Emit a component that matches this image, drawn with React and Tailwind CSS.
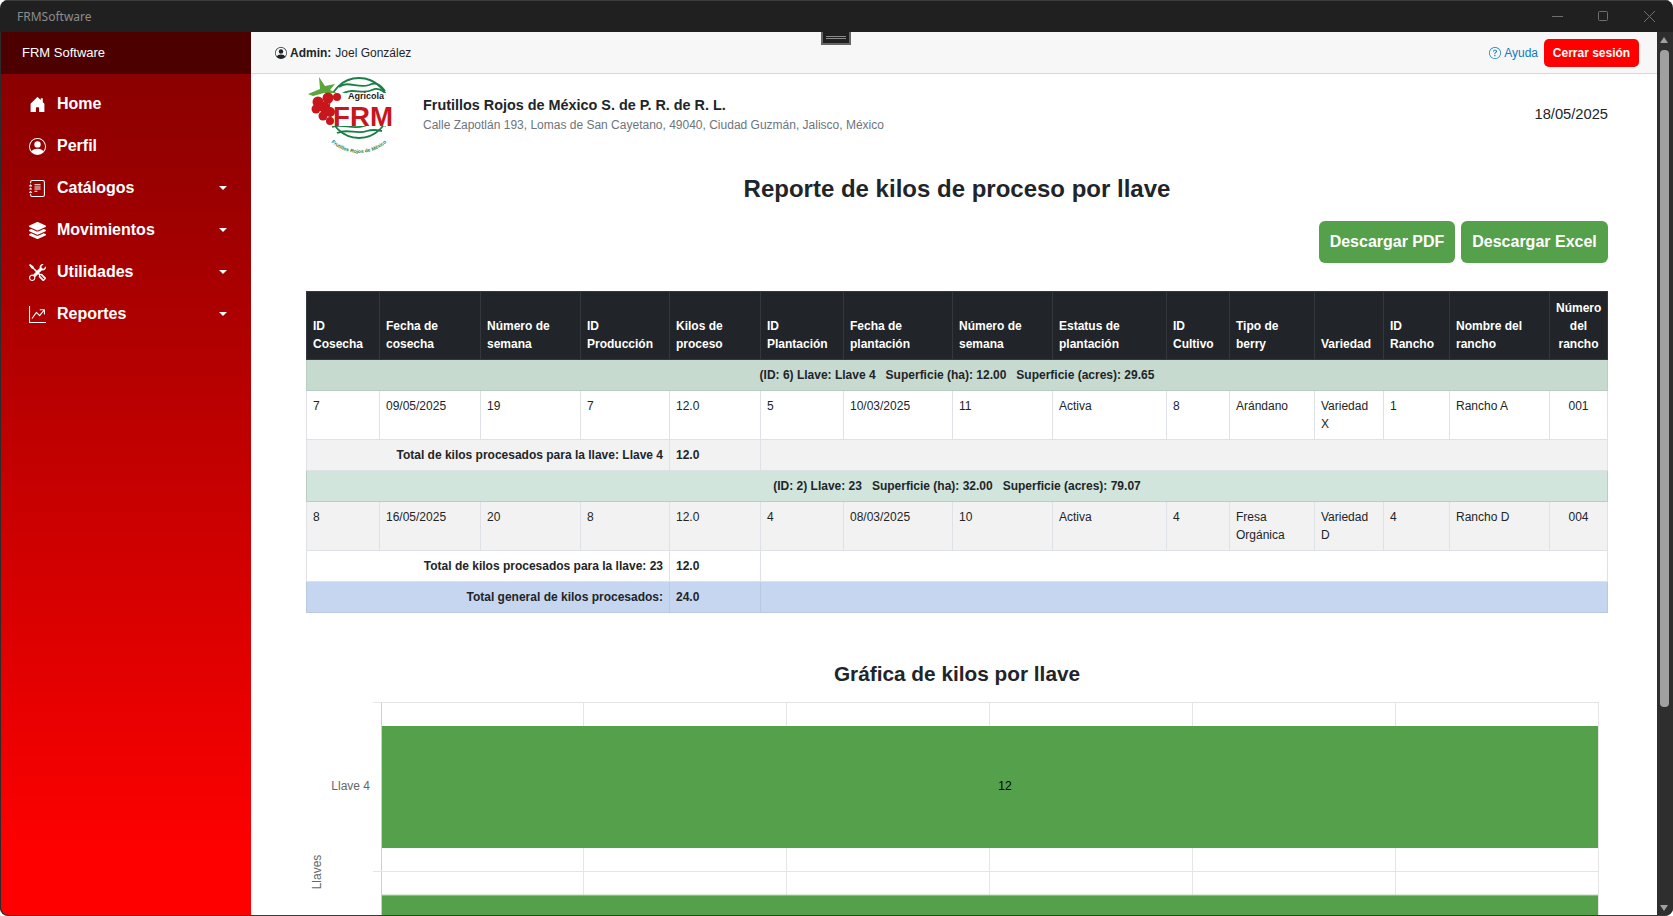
import { FaLayerGroup } from "react-icons/fa";
import {
  BsHouseDoorFill,
  BsPersonCircle,
  BsJournalText,
  BsTools,
  BsGraphUpArrow,
  BsQuestionCircle,
} from "react-icons/bs";

const menu = [
  { label: "Home", icon: BsHouseDoorFill },
  { label: "Perfil", icon: BsPersonCircle },
  { label: "Catálogos", icon: BsJournalText, caret: true },
  { label: "Movimientos", icon: FaLayerGroup, caret: true },
  { label: "Utilidades", icon: BsTools, caret: true },
  { label: "Reportes", icon: BsGraphUpArrow, caret: true },
];

const columns = [
  { title: ["ID", "Cosecha"], w: 73 },
  { title: ["Fecha de", "cosecha"], w: 101 },
  { title: ["Número de", "semana"], w: 100 },
  { title: ["ID", "Producción"], w: 89 },
  { title: ["Kilos de", "proceso"], w: 91 },
  { title: ["ID", "Plantación"], w: 83 },
  { title: ["Fecha de", "plantación"], w: 109 },
  { title: ["Número de", "semana"], w: 100 },
  { title: ["Estatus de", "plantación"], w: 114 },
  { title: ["ID", "Cultivo"], w: 63 },
  { title: ["Tipo de", "berry"], w: 85 },
  { title: ["Variedad"], w: 69 },
  { title: ["ID", "Rancho"], w: 66 },
  { title: ["Nombre del", "rancho"], w: 100 },
  { title: ["Número", "del", "rancho"], w: 58 },
];

const groups = [
  {
    info: "(ID: 6) Llave: Llave 4\u00a0\u00a0\u00a0Superficie (ha): 12.00\u00a0\u00a0\u00a0Superficie (acres): 29.65",
    groupBg: "bg-[#c7dad0]",
    rowBg: "bg-white",
    totalBg: "bg-[#f2f2f2]",
    row: ["7", "09/05/2025", "19", "7", "12.0", "5", "10/03/2025", "11", "Activa", "8", "Arándano", "Variedad X", "1", "Rancho A", "001"],
    total: "Total de kilos procesados para la llave: Llave 4",
  },
  {
    info: "(ID: 2) Llave: 23\u00a0\u00a0\u00a0Superficie (ha): 32.00\u00a0\u00a0\u00a0Superficie (acres): 79.07",
    groupBg: "bg-[#d1e5dc]",
    rowBg: "bg-[#f2f2f2]",
    totalBg: "bg-white",
    row: ["8", "16/05/2025", "20", "8", "12.0", "4", "08/03/2025", "10", "Activa", "4", "Fresa Orgánica", "Variedad D", "4", "Rancho D", "004"],
    total: "Total de kilos procesados para la llave: 23",
  },
];

const gridX = [75, 277, 480, 683, 886, 1089, 1292];

function Logo() {
  return (
    <svg width="90" height="81" viewBox="0 0 90 81" className="shrink-0">
      <defs>
        <path id="logoArc" d="M13 47 A41 41 0 0 0 93 47" fill="none" />
      </defs>
      <circle cx="53" cy="34" r="30" fill="none" stroke="#1a7f45" strokeWidth="1.8" />
      <path d="M33 13 C42 6 52 15 63 11 C70 8 74 10 79 17" fill="none" stroke="#1a7f45" strokeWidth="1.8" />
      <path d="M36 20 C46 13 56 21 66 16 C72 13 77 16 82 22" fill="none" stroke="#1a7f45" strokeWidth="1.8" />
      <path d="M26 53 C36 49 46 56 58 52 C66 49 74 49 80 52" fill="none" stroke="#1a7f45" strokeWidth="1.8" />
      <path d="M31 59 C41 54 51 61 61 57 C67 55 71 56 76 57" fill="none" stroke="#1a7f45" strokeWidth="1.8" />
      <rect x="26" y="19" width="64" height="33" fill="#fff" />
      <path d="M2 20 L14 15 L13 3 L19 12 L29 10 L24 16 L31 19 L18 19 L7 22 Z" fill="#5aa63c" />
      <g fill="#c8161d">
        <circle cx="12" cy="28" r="5.5" />
        <circle cx="22" cy="24" r="5.5" />
        <circle cx="31" cy="23" r="4" />
        <circle cx="10" cy="35" r="4.5" />
        <circle cx="18" cy="33" r="5.5" />
        <circle cx="17" cy="42" r="4.5" />
        <circle cx="24" cy="38" r="5" />
        <circle cx="24" cy="47" r="4" />
      </g>
      <text x="42" y="25" fontFamily="Liberation Sans, sans-serif" fontWeight="700" fontSize="9" fill="#1c1c1c">
        Agricola
      </text>
      <text x="27" y="52" fontFamily="Liberation Sans, sans-serif" fontWeight="700" fontSize="28" fill="#c8161d" textLength="60" lengthAdjust="spacingAndGlyphs">
        FRM
      </text>
      <text fontFamily="Liberation Sans, sans-serif" fontWeight="700" fontSize="5" fill="#1a7f45" textAnchor="middle">
        <textPath href="#logoArc" startOffset="50%">
          Frutillos Rojos de México
        </textPath>
      </text>
    </svg>
  );
}

function Chart() {
  return (
    <svg width="1302" height="226" viewBox="0 0 1302 226" className="block">
      {gridX.map(x => (
        <line key={x} x1={x + 0.5} x2={x + 0.5} y1="11" y2="226" stroke={x === 75 ? "#cfcfcf" : "#e5e5e5"} />
      ))}
      <line x1="67" x2="1293" y1="11.5" y2="11.5" stroke="#e5e5e5" />
      <line x1="67" x2="1293" y1="180.5" y2="180.5" stroke="#e5e5e5" />
      <rect x="76" y="35" width="1216" height="122" fill="#55a04a" />
      <rect x="76" y="204" width="1216" height="22" fill="#55a04a" />
      <line x1="76" x2="1292" y1="204" y2="204" stroke="#bcd8b6" />
      <text x="699" y="99" textAnchor="middle" fontFamily="Liberation Sans, sans-serif" fontSize="12" fill="#000">
        12
      </text>
      <text x="64" y="99" textAnchor="end" fontFamily="Liberation Sans, sans-serif" fontSize="12" fill="#666">
        Llave 4
      </text>
      <text transform="translate(15 181) rotate(-90)" textAnchor="middle" fontFamily="Liberation Sans, sans-serif" fontSize="12" fill="#666">
        Llaves
      </text>
    </svg>
  );
}

function ReportTable() {
  return (
    <table className="w-[1302px] table-fixed border-collapse text-[12px] leading-[18px] text-[#212529]">
      <colgroup>
        {columns.map((c, i) => (
          <col key={i} style={{ width: c.w }} />
        ))}
      </colgroup>
      <thead>
        <tr className="bg-[#212529] text-white">
          {columns.map((c, i) => (
            <th
              key={i}
              className={`h-[68px] border border-[#32383e] px-[6px] py-[6px] align-bottom font-bold ${i === 14 ? "text-center" : "text-left"}`}
            >
              {c.title.map(line => (
                <div key={line}>{line}</div>
              ))}
            </th>
          ))}
        </tr>
      </thead>
      <tbody>
        {groups.map(g => (
          <GroupRows key={g.info} group={g} />
        ))}
        <tr className="bg-[#c6d6f1] font-bold">
          <td colSpan={4} className="border border-[#b9c9e4] px-[6px] py-[6px] text-right">
            Total general de kilos procesados:
          </td>
          <td className="border border-[#b9c9e4] px-[6px] py-[6px]">24.0</td>
          <td colSpan={10} className="border border-[#b9c9e4]"></td>
        </tr>
      </tbody>
    </table>
  );
}

function GroupRows({ group }) {
  return (
    <>
      <tr className={`${group.groupBg} font-bold`}>
        <td colSpan={15} className="border border-[#b9cdc3] px-[6px] py-[6px] text-center">
          {group.info}
        </td>
      </tr>
      <tr className={`${group.rowBg} align-top`}>
        {group.row.map((value, i) => (
          <td
            key={i}
            className={`h-[49px] border border-[#dee2e6] px-[6px] py-[6px] ${i === 14 ? "text-center" : ""}`}
          >
            {value}
          </td>
        ))}
      </tr>
      <tr className={`${group.totalBg} font-bold`}>
        <td colSpan={4} className="border border-[#dee2e6] px-[6px] py-[6px] text-right">
          {group.total}
        </td>
        <td className="border border-[#dee2e6] px-[6px] py-[6px]">12.0</td>
        <td colSpan={10} className="border border-[#dee2e6]"></td>
      </tr>
    </>
  );
}

function App() {
  return (
    <div className="flex h-screen flex-col overflow-hidden rounded-[8px] border-b border-[#3a3a3a] bg-[#202020] font-['Liberation_Sans',Arial,sans-serif]">
      {/* title bar */}
      <div className="flex h-[32px] shrink-0 items-center justify-between border-t border-[#3c3c3c] pl-[17px] pr-[16px]">
        <span className="font-['Noto_Sans',sans-serif] text-[12px] text-[#8c8c8c]">FRMSoftware</span>
        <div className="flex items-center gap-[31px] text-[#6f6f6f]">
          <svg width="15" height="15" viewBox="0 0 15 15">
            <line x1="2" x2="13" y1="7.5" y2="7.5" stroke="currentColor" />
          </svg>
          <svg width="15" height="15" viewBox="0 0 15 15">
            <rect x="2.5" y="2.5" width="9" height="9" rx="1" fill="none" stroke="currentColor" />
          </svg>
          <svg width="15" height="15" viewBox="0 0 15 15">
            <path d="M2 2 L13 13 M13 2 L2 13" fill="none" stroke="currentColor" />
          </svg>
        </div>
      </div>

      <div className="relative flex min-h-0 flex-1">
        {/* drag handle */}
        <div className="absolute left-[821px] top-0 z-10 flex h-[13px] w-[30px] flex-col items-center justify-center gap-[1px] border-2 border-t-0 border-[#666] bg-[#202020]">
          <div className="h-[1px] w-[20px] bg-[#8a8a8a]"></div>
          <div className="h-[1px] w-[20px] bg-[#8a8a8a]"></div>
        </div>

        {/* sidebar */}
        <aside className="flex w-[251px] shrink-0 flex-col overflow-hidden rounded-bl-[8px] border-l border-[#2c2c2c]">
          <div className="flex h-[42px] shrink-0 items-center bg-[#4d0000] pl-[21px] text-[13px] text-white">
            FRM Software
          </div>
          <nav className="flex-1 bg-gradient-to-b from-[#8b0000] to-[#ff0000] to-[93%] pt-[9px]">
            {menu.map(item => {
              const Icon = item.icon;
              return (
                <div key={item.label} className="flex h-[42px] items-center pl-[28px] pr-[24px] text-white">
                  <Icon className="mr-[11px] h-[17px] w-[17px] shrink-0" />
                  <span className="text-[16px] font-bold">{item.label}</span>
                  {item.caret && (
                    <span className="ml-auto h-0 w-0 border-x-[4px] border-t-[4px] border-x-transparent border-t-white"></span>
                  )}
                </div>
              );
            })}
          </nav>
        </aside>

        {/* main */}
        <main className="flex min-w-0 flex-1 flex-col overflow-hidden bg-white">
          <div className="flex h-[42px] shrink-0 items-center justify-between border-b border-[#d9d9d9] bg-[#f7f7f7] pl-[24px] pr-[18px] text-[12px] text-[#212529]">
            <div className="flex items-center">
              <BsPersonCircle className="mr-[3px] h-[12px] w-[12px]" />
              <b>Admin:</b>
              <span className="ml-[4px]">Joel González</span>
            </div>
            <div className="flex items-center gap-[6px]">
              <span className="flex items-center text-[#0b7bc4]">
                <BsQuestionCircle className="mr-[3px] h-[12px] w-[12px]" />
                Ayuda
              </span>
              <button className="h-[28px] w-[95px] rounded-[5px] bg-[#ff0000] text-[12px] font-bold text-white">
                Cerrar sesión
              </button>
            </div>
          </div>

          <div className="w-[1302px] ml-[55px]">
            <div className="flex h-[81px] items-center justify-between">
              <div className="flex items-center">
                <Logo />
                <div className="ml-[27px] -mt-[2px]">
                  <div className="text-[14.4px] font-bold leading-[22px] text-[#212529]">
                    Frutillos Rojos de México S. de P. R. de R. L.
                  </div>
                  <div className="text-[12px] leading-[18px] text-[#6c757d]">
                    Calle Zapotlán 193, Lomas de San Cayetano, 49040, Ciudad Guzmán, Jalisco, México
                  </div>
                </div>
              </div>
              <div className="text-[14.7px] text-[#212529]">18/05/2025</div>
            </div>

            <h1 className="mt-[19px] text-center text-[24px] font-bold leading-[30px] text-[#212529]">
              Reporte de kilos de proceso por llave
            </h1>

            <div className="mt-[17px] flex justify-end gap-[6px]">
              <button className="h-[42px] w-[136px] rounded-[6px] bg-[#55a04a] text-[16px] font-bold text-white">
                Descargar PDF
              </button>
              <button className="h-[42px] w-[147px] rounded-[6px] bg-[#55a04a] text-[16px] font-bold text-white">
                Descargar Excel
              </button>
            </div>

            <div className="mt-[28px]">
              <ReportTable />
            </div>

            <h2 className="mt-[49px] text-center text-[20.8px] font-bold leading-[24px] text-[#212529]">
              Gráfica de kilos por llave
            </h2>
            <div className="mt-[5px]">
              <Chart />
            </div>
          </div>
        </main>

        {/* scrollbar */}
        <div className="flex w-[16px] shrink-0 flex-col items-start bg-[#2e2e2e] pl-[3px]">
          <div className="mt-[5px] h-0 w-0 border-x-[4.5px] border-b-[6px] border-x-transparent border-b-[#a0a0a0]"></div>
          <div className="mt-[7px] h-[657px] w-[9px] rounded-[4px] bg-[#a0a0a0]"></div>
          <div className="mt-auto mb-[4px] h-0 w-0 border-x-[4.5px] border-t-[6px] border-x-transparent border-t-[#a0a0a0]"></div>
        </div>
      </div>
    </div>
  );
}

export default App;
